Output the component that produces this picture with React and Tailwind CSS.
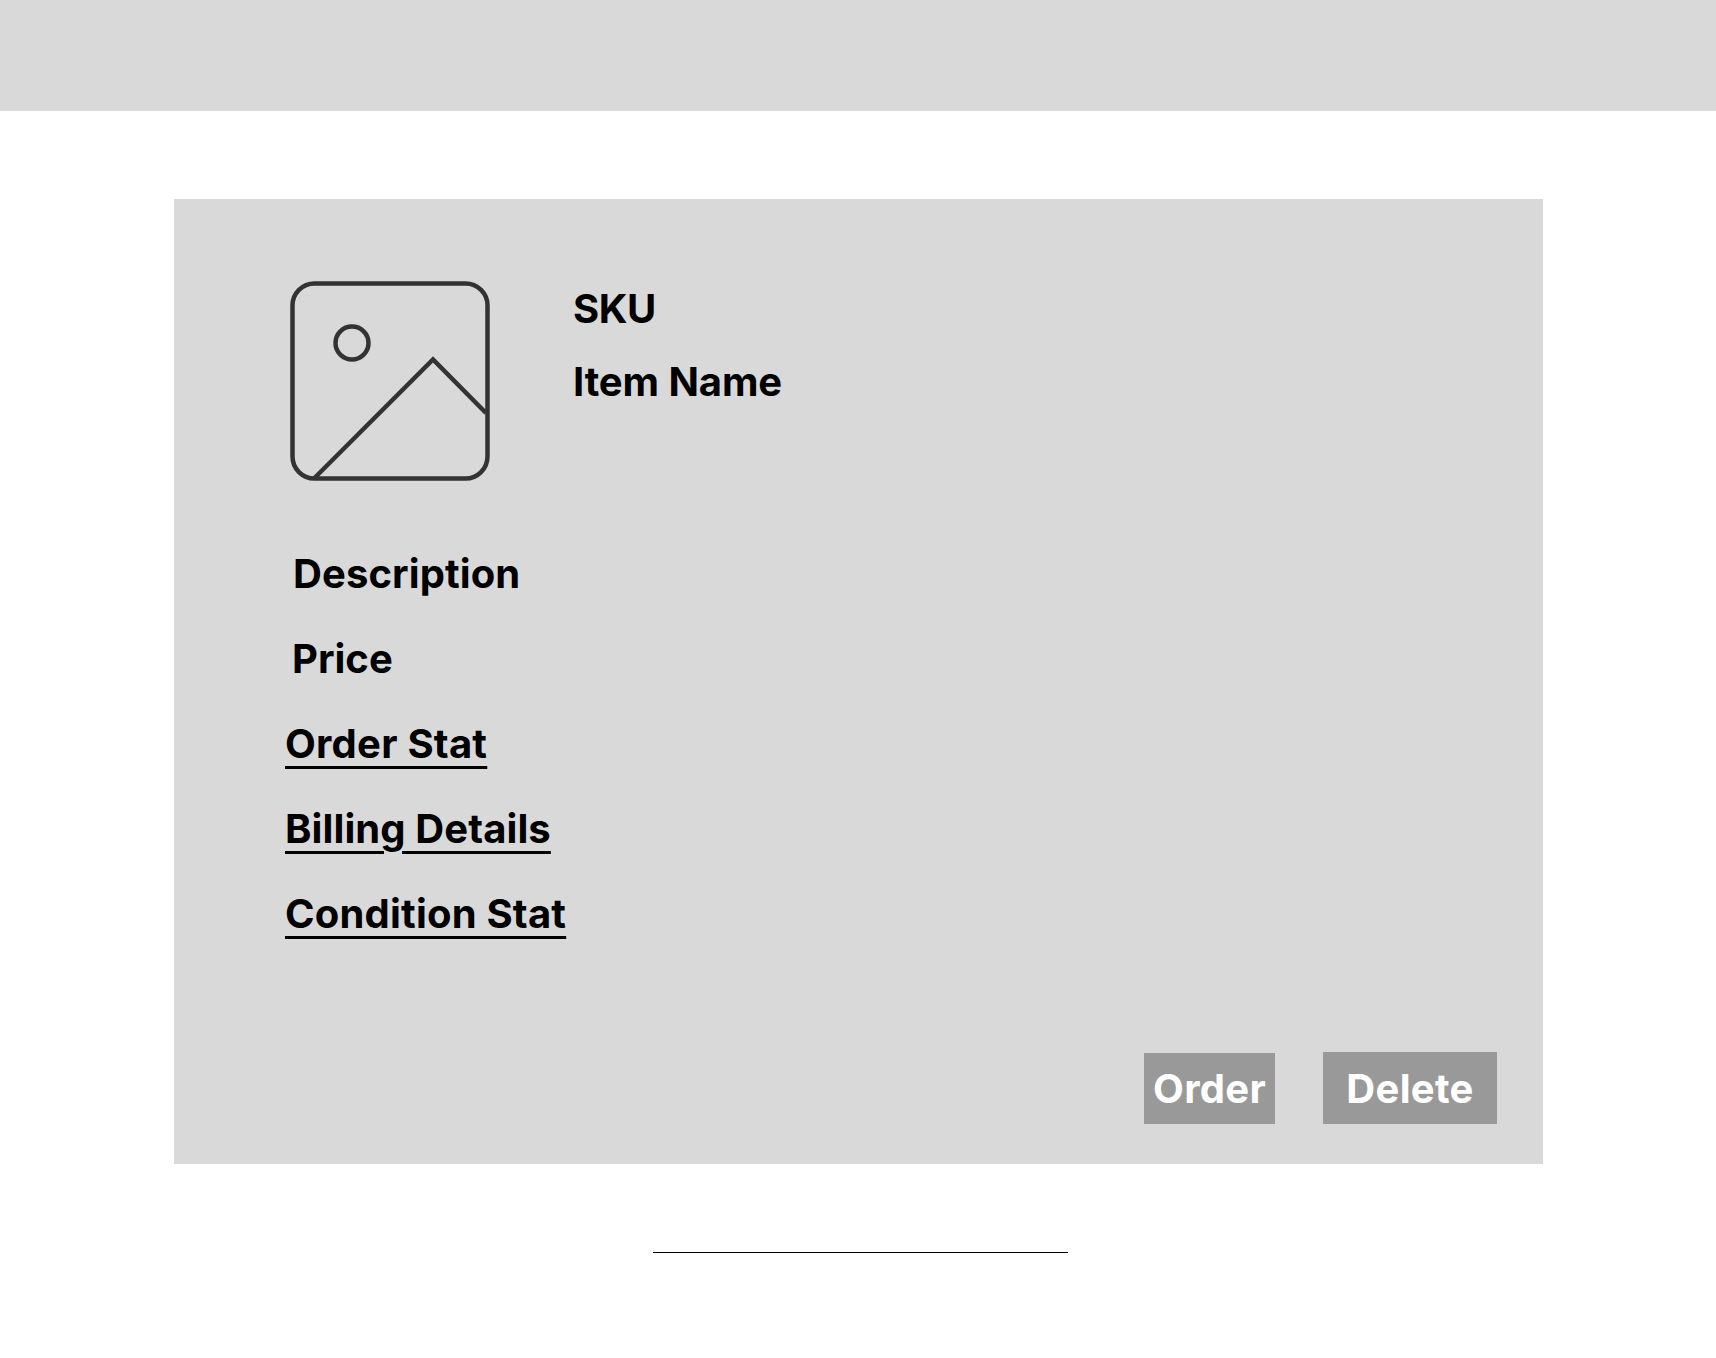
// Item detail wireframe
function ImagePlaceholder() {
  return (
    <svg width="200" height="200" viewBox="0 0 200 200" fill="none" stroke="#333333" strokeWidth="4.5" className="shrink-0">
      <rect x="2.5" y="2.5" width="195" height="195" rx="22" />
      <circle cx="62" cy="62" r="16.5" />
      <path d="M24 197.500L143 78.500L196 132" />
    </svg>
  );
}

function LinkRow({ label, className }) {
  return (
    <div className={`ml-[111px] h-[85px] underline decoration-[3px] underline-offset-[8px] ${className}`}>{label}</div>
  );
}

export default function App() {
  return (
    <div className="min-h-[1358px] bg-white font-['Inter',sans-serif] text-[40px] leading-[48px] font-bold text-black">
      <header className="h-[111px] bg-[#d9d9d9]" />

      <main className="mx-[174px] mt-[88px] h-[965px] w-[1369px] bg-[#d9d9d9] pt-[82px]">
        <div className="ml-[116px] flex">
          <ImagePlaceholder />
          <div className="ml-[83px] pt-[4px]">
            <div className="h-[73px] tracking-[-0.5px]">SKU</div>
            <div className="tracking-[-0.1px]">Item Name</div>
          </div>
        </div>

        <div className="ml-[119px] mt-[69px] h-[85px] tracking-[0.1px]">Description</div>
        <div className="ml-[118px] h-[85px]">Price</div>
        <LinkRow label="Order Stat" className="tracking-[0.24px]" />
        <LinkRow label="Billing Details" className="tracking-[0.1px]" />
        <LinkRow label="Condition Stat" className="tracking-[0.2px]" />

        <div className="mt-[77px] flex items-end text-white tracking-[0.3px]">
          <button className="ml-[970px] flex h-[71px] w-[131px] items-center justify-center bg-[#999999] pt-[1px]">Order</button>
          <button className="ml-[48px] flex h-[72px] w-[174px] items-center justify-center bg-[#999999] pt-[1px]">Delete</button>
        </div>
      </main>

      <div className="ml-[653px] mt-[88px] h-px w-[415px] bg-black" />
    </div>
  );
}
